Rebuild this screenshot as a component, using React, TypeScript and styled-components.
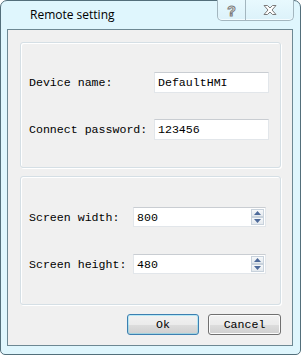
import React from "react";
import styled, { createGlobalStyle } from "styled-components";

const Global = createGlobalStyle`
  html, body { margin: 0; padding: 0; background: #ffffff; }
  body { font-family: "Liberation Mono", monospace; }
`;

const Window = styled.div`
  box-sizing: border-box;
  width: 301px;
  height: 355px;
  border: 1px solid #536f7b;
  border-radius: 7px 7px 5px 5px;
  background: #dff6fd;
  padding: 0 7px 8px 6px;
  display: flex;
  flex-direction: column;
`;

const TitleBar = styled.div`
  height: 28px;
  display: flex;
  align-items: flex-start;
  justify-content: space-between;
`;

const Title = styled.div`
  font-family: "Open Sans", "Liberation Sans", sans-serif;
  font-size: 12px;
  color: #000;
  margin-left: 23px;
  margin-top: 6px;
  line-height: 16px;
`;

const CaptionGroup = styled.div`
  display: flex;
  margin-top: -1px;
  margin-right: -1px;
  height: 20px;
  border: 1px solid #a3b6bf;
  border-top: none;
  border-radius: 0 0 5px 5px;
  background: linear-gradient(#e8f9fe, #dcf2fa);
  box-shadow: inset 0 -1px 0 #f4fcff;
`;

const CaptionButton = styled.div<{ $w: number; $divider?: boolean }>`
  width: ${(p) => p.$w}px;
  display: flex;
  align-items: center;
  justify-content: center;
  ${(p) => (p.$divider ? "border-right: 1px solid #a3b6bf;" : "")}
`;

const HelpGlyph = styled.span`
  font-family: "Liberation Sans", sans-serif;
  font-weight: bold;
  font-size: 14px;
  line-height: 14px;
  color: #ffffff;
  -webkit-text-stroke: 1px #7b7b7b;
  margin-top: 1px;
`;

const Client = styled.div`
  flex: 1;
  border: 1px solid #6d8893;
  background: #f0f0f0;
  display: flex;
  flex-direction: column;
  padding: 12px 12px 0 12px;
  gap: 8px;
`;

const Group = styled.div<{ $pt: number; $gap: number; $pb: number; $labelCol: number }>`
  box-sizing: border-box;
  width: 261px;
  border: 1px solid #d5dfe5;
  border-radius: 3px;
  box-shadow: inset 1px 1px 0 #ffffff, 1px 1px 0 #ffffff;
  padding: ${(p) => p.$pt}px 0 ${(p) => p.$pb}px 8px;
  display: grid;
  grid-template-columns: ${(p) => p.$labelCol}px auto;
  row-gap: ${(p) => p.$gap}px;
  align-items: center;
`;

const Label = styled.div`
  font-family: "Liberation Mono", monospace;
  font-size: 11.6px;
  color: #000;
  white-space: nowrap;
`;

const TextBox = styled.div<{ $w: number; $h: number }>`
  box-sizing: border-box;
  width: ${(p) => p.$w}px;
  height: ${(p) => p.$h}px;
  background: #fff;
  border: 1px solid #e2e6ea;
  border-top-color: #c9cdd2;
  font-family: "Liberation Mono", monospace;
  font-size: 11.6px;
  color: #000;
  display: flex;
  align-items: center;
  padding-left: 3px;
  position: relative;
`;

const Spin = styled.div`
  position: absolute;
  right: 1px;
  top: 1px;
  bottom: 1px;
  width: 13px;
  display: flex;
  flex-direction: column;
`;

const SpinHalf = styled.div`
  flex: 1;
  box-sizing: border-box;
  border: 1px solid #c8d2dc;
  background: linear-gradient(#f6f8fa, #e4e9ee);
  display: flex;
  align-items: center;
  justify-content: center;
`;

const ButtonRow = styled.div`
  display: flex;
  justify-content: flex-end;
  gap: 9px;
  width: 261px;
  margin-top: 1px;
`;

const Button = styled.div<{ $default?: boolean; $w: number }>`
  box-sizing: border-box;
  width: ${(p) => p.$w}px;
  height: 21px;
  border: 1px solid ${(p) => (p.$default ? "#3c7fb1" : "#707070")};
  border-radius: 3px;
  background: linear-gradient(#f2f2f2 0%, #ebebeb 50%, #dddddd 51%, #cfcfcf 100%);
  box-shadow: inset 0 0 0 1px ${(p) => (p.$default ? "#48d8fb55" : "#fcfcfc")};
  font-family: "Liberation Mono", monospace;
  font-size: 11.6px;
  color: #000;
  display: flex;
  align-items: center;
  justify-content: center;
`;

const Arrow = ({ up }: { up?: boolean }) => (
  <svg width="7" height="4" viewBox="0 0 7 4">
    <polygon points={up ? "3.5,0 7,4 0,4" : "0,0 7,0 3.5,4"} fill="#4d6a9a" />
  </svg>
);

const CloseIcon = () => (
  <svg width="14" height="10" viewBox="0 0 14 10">
    <polygon
      points="1,0.5 4.5,0.5 7,3 9.5,0.5 13,0.5 9,5 13,9.5 9.5,9.5 7,7 4.5,9.5 1,9.5 5,5"
      fill="#ffffff"
      stroke="#7b7b7b"
      strokeWidth="1"
      strokeLinejoin="round"
    />
  </svg>
);

export default function App() {
  return (
    <>
      <Global />
      <Window>
        <TitleBar>
          <Title>Remote setting</Title>
          <CaptionGroup>
            <CaptionButton $w={27} $divider>
              <HelpGlyph>?</HelpGlyph>
            </CaptionButton>
            <CaptionButton $w={47}>
              <CloseIcon />
            </CaptionButton>
          </CaptionGroup>
        </TitleBar>
        <Client>
          <Group $pt={29} $gap={26} $pb={27} $labelCol={125}>
            <Label>Device name:</Label>
            <TextBox $w={115} $h={21}>DefaultHMI</TextBox>
            <Label>Connect password:</Label>
            <TextBox $w={115} $h={21}>123456</TextBox>
          </Group>
          <Group $pt={30} $gap={27} $pb={30} $labelCol={104}>
            <Label>Screen width:</Label>
            <TextBox $w={133} $h={20}>
              800
              <Spin>
                <SpinHalf><Arrow up /></SpinHalf>
                <SpinHalf><Arrow /></SpinHalf>
              </Spin>
            </TextBox>
            <Label>Screen height:</Label>
            <TextBox $w={133} $h={20}>
              480
              <Spin>
                <SpinHalf><Arrow up /></SpinHalf>
                <SpinHalf><Arrow /></SpinHalf>
              </Spin>
            </TextBox>
          </Group>
          <ButtonRow>
            <Button $default $w={72}>Ok</Button>
            <Button $w={73}>Cancel</Button>
          </ButtonRow>
        </Client>
      </Window>
    </>
  );
}
